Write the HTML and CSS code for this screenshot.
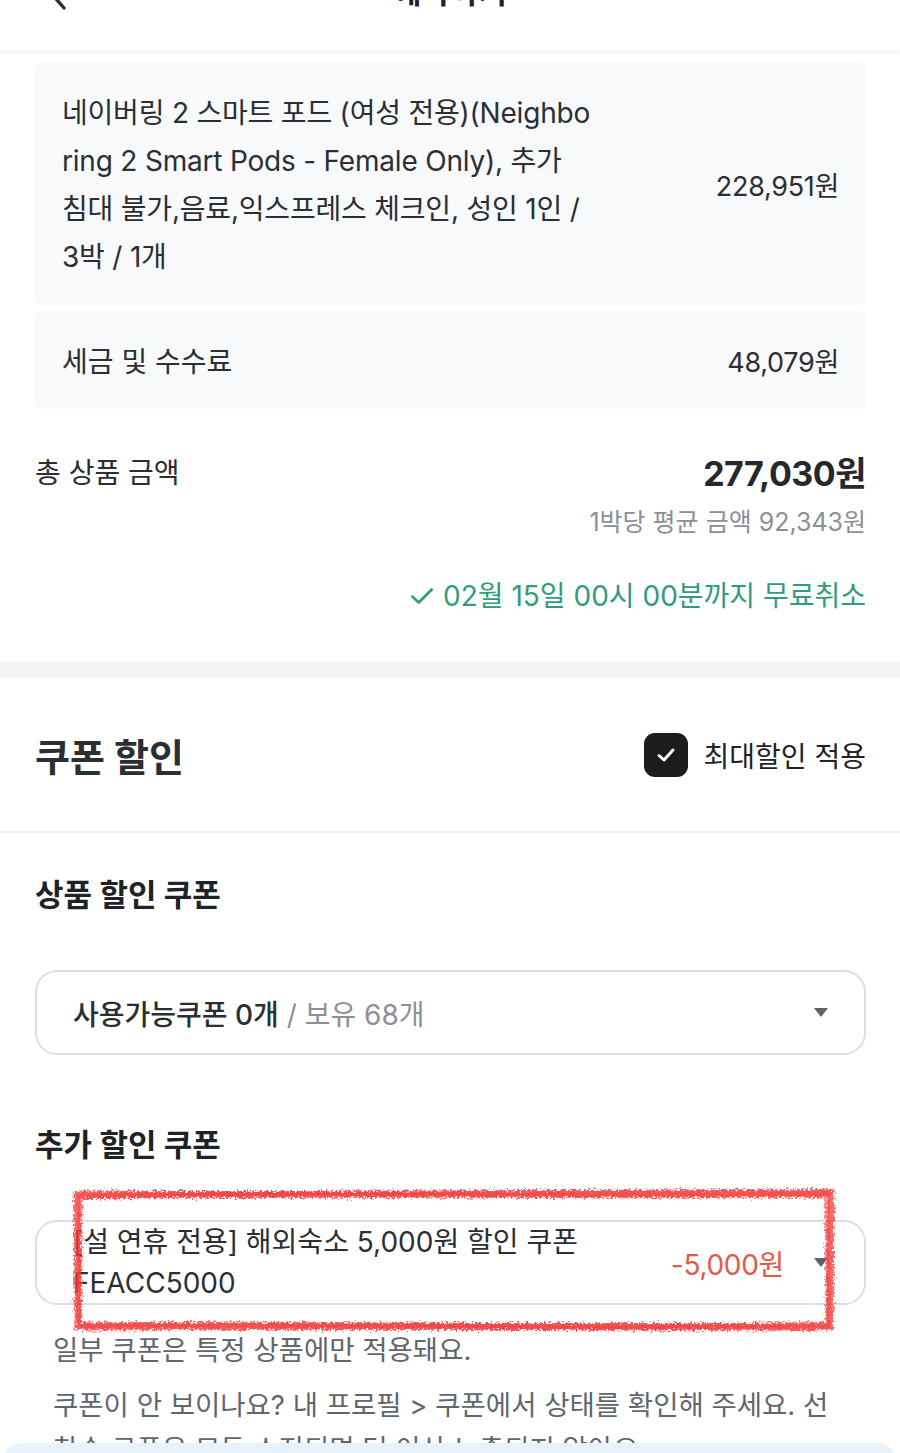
FILE: index.html
```html
<!DOCTYPE html>
<html lang="ko">
<head>
<meta charset="utf-8">
<title>예약하기</title>
<link rel="stylesheet" href="styles.css">
</head>
<body>
<div class="page">
  <header class="topbar">
    <div class="topbar-inner">
      <svg class="back" width="40" height="40" viewBox="0 0 40 40"><path d="M26 4 L12 20 L26 36" fill="none" stroke="#2b2e33" stroke-width="3.4" stroke-linecap="round" stroke-linejoin="round"/></svg>
      <h1 class="title">예약하기</h1>
    </div>
  </header>

  <section class="summary">
    <div class="card card-product">
      <p class="item-name">네이버링 2 스마트 포드 (여성 전용)(Neighbo<br>ring 2 Smart Pods - Female Only), 추가<br>침대 불가,음료,익스프레스 체크인, 성인 1인 /<br>3박 / 1개</p>
      <span class="item-price">228,951원</span>
    </div>
    <div class="card card-fee">
      <span class="fee-label">세금 및 수수료</span>
      <span class="item-price">48,079원</span>
    </div>

    <div class="total-row">
      <span class="total-label">총 상품 금액</span>
      <span class="total-price">277,030원</span>
    </div>
    <div class="avg">1박당 평균 금액 92,343원</div>
    <div class="free-cancel">
      <svg width="26" height="26" viewBox="0 0 24 24"><path d="M3 12.5 L9 18 L21 6" fill="none" stroke="#2f9d7d" stroke-width="2.4" stroke-linecap="round" stroke-linejoin="round"/></svg>
      <span>02월 15일 00시 00분까지 무료취소</span>
    </div>
  </section>

  <div class="band"></div>

  <section class="coupon-head">
    <h2 class="coupon-title">쿠폰 할인</h2>
    <label class="max-apply">
      <span class="checkbox"><svg width="24" height="24" viewBox="0 0 24 24"><path d="M5 12.5 L10 17 L19 7" fill="none" stroke="#fff" stroke-width="3" stroke-linecap="round" stroke-linejoin="round"/></svg></span>
      <span>최대할인 적용</span>
    </label>
  </section>
  <div class="divider"></div>

  <section class="coupons">
    <h3 class="sub-title">상품 할인 쿠폰</h3>
    <div class="select">
      <span class="select-text"><b class="strong">사용가능쿠폰 0개</b><span class="muted"> / 보유 68개</span></span>
      <span class="caret"></span>
    </div>

    <h3 class="sub-title second">추가 할인 쿠폰</h3>
    <div class="select-wrap">
      <div class="select select-chosen">
        <span class="select-text chosen">[설 연휴 전용] 해외숙소 5,000원 할인 쿠폰<br>FEACC5000</span>
        <span class="discount">-5,000원</span>
        <span class="caret"></span>
      </div>
      <svg class="scribble" width="770" height="150" viewBox="0 0 770 150">
        <defs>
          <filter id="rough" x="-5%" y="-20%" width="110%" height="140%">
            <feTurbulence type="fractalNoise" baseFrequency="0.45" numOctaves="3" seed="4" result="n"/>
            <feDisplacementMap in="SourceGraphic" in2="n" scale="8" xChannelSelector="R" yChannelSelector="G"/>
          </filter>
        </defs>
        <g filter="url(#rough)" fill="none" stroke="#f23b3b" stroke-linecap="round">
          <path d="M6 10 L760 8 L759 142 L7 141 Z" stroke-width="7" opacity="0.75"/>
          <path d="M8 12 C200 6 500 13 757 10 M756 12 L757 140 M755 139 C500 144 250 137 9 140 M8 139 L9 12" stroke-width="5" opacity="0.6"/>
          <path d="M10 7 C300 11 520 5 758 6 M12 144 C300 140 520 145 757 143" stroke-width="4" opacity="0.45"/>
        </g>
      </svg>
    </div>

    <div class="notes">
      <p>일부 쿠폰은 특정 상품에만 적용돼요.</p>
      <p>쿠폰이 안 보이나요? 내 프로필 &gt; 쿠폰에서 상태를 확인해 주세요. 선착순 쿠폰은 모두 소진되면 더 이상 노출되지 않아요.</p>
    </div>
  </section>

  <div class="bottom-sheet"></div>
</div>
</body>
</html>
```
FILE: styles.css
```css
* { box-sizing: border-box; }
html, body { margin: 0; padding: 0; background: #fff; }
body {
  font-family: "Inter", "Noto Sans CJK KR", "Noto Sans", sans-serif;
  color: #2b2e33;
  width: 900px;
  height: 1453px;
  overflow: hidden;
}
.page { position: relative; width: 900px; }

.topbar {
  height: 52px;
  overflow: hidden;
  background: #fff;
  box-shadow: 0 2px 3px rgba(0,0,0,0.04);
  border-bottom: 1px solid #f2f3f5;
  position: relative;
}
.topbar-inner {
  margin-top: -30px;
  height: 44px;
  display: flex;
  align-items: center;
  justify-content: center;
  position: relative;
}
.back { position: absolute; left: 38px; top: 2px; }
.title { margin: 0; font-size: 31px; font-weight: 700; line-height: 44px; color: #1f2226; }

.summary { padding: 10px 34px 0 35px; }
.card {
  background: #f8f9fa;
  border-radius: 8px;
  display: flex;
  align-items: center;
  justify-content: space-between;
  padding: 0 27px;
}
.card-product { height: 243px; padding-top: 2px; }
.card-fee { height: 98px; margin-top: 6px; }
.item-name {
  margin: 0;
  font-size: 28px;
  line-height: 48px;
  white-space: nowrap;
  color: #2b2e33;
  letter-spacing: -0.2px;
}
.item-price { font-size: 27px; color: #2b2e33; letter-spacing: -0.3px; }
.fee-label { font-size: 28px; color: #2b2e33; }

.total-row {
  margin-top: 40px;
  display: flex;
  justify-content: space-between;
  align-items: center;
  height: 44px;
}
.total-label { font-size: 28px; color: #2b2e33; }
.total-price { font-size: 34px; font-weight: 700; color: #25282c; letter-spacing: -0.5px; }
.avg {
  margin-top: 11px;
  text-align: right;
  font-size: 25px;
  line-height: 36px;
  color: #8c9096;
}
.free-cancel {
  margin-top: 38px;
  display: flex;
  justify-content: flex-end;
  align-items: center;
  gap: 8px;
  font-size: 28px;
  line-height: 36px;
  color: #2f9d7d;
  padding-bottom: 47px;
}

.band { height: 17px; background: #f3f4f6; }

.coupon-head {
  height: 153px;
  padding: 0 34px 0 35px;
  display: flex;
  justify-content: space-between;
  align-items: center;
}
.coupon-title { margin: 0; font-size: 38px; font-weight: 700; color: #2b2e33; }
.max-apply { display: flex; align-items: center; gap: 16px; font-size: 28px; color: #1f2226; }
.checkbox {
  width: 44px; height: 44px;
  border-radius: 11px;
  background: #1c1c1e;
  display: flex; align-items: center; justify-content: center;
}
.divider { height: 2px; background: #eceef1; }

.coupons { padding: 0 34px 0 35px; }
.sub-title {
  margin: 42px 0 0;
  font-size: 31px;
  font-weight: 700;
  line-height: 40px;
  color: #1f2226;
}
.sub-title.second { margin-top: 70px; }
.select {
  margin-top: 55px;
  height: 85px;
  border: 2px solid #dcdee2;
  border-radius: 22px;
  display: flex;
  align-items: center;
  padding: 0 36px 0 36px;
}
.select-text { flex: 1; font-size: 28px; }
.strong { font-weight: 500; color: #2b2e33; }
.muted { color: #8c9096; }
.caret {
  width: 0; height: 0;
  border-left: 7px solid transparent;
  border-right: 7px solid transparent;
  border-top: 9px solid #5f6368;
}
.select-wrap { position: relative; margin-top: 55px; }
.select-chosen { margin-top: 0; }
.chosen { line-height: 41px; color: #2b2e33; }
.discount { font-size: 28px; color: #e0594a; margin-right: 30px; letter-spacing: -0.3px; }
.scribble { position: absolute; left: 36px; top: -35px; pointer-events: none; }

.notes { padding: 0 18px; color: #61666d; font-size: 27.5px; line-height: 44px; }
.notes p { margin: 23px 0 0; }
.notes p + p { margin-top: 11px; }

.bottom-sheet {
  position: absolute;
  left: 2px; right: 3px;
  top: 1443px;
  height: 60px;
  background: #e7f2fb;
  border-radius: 20px 20px 0 0;
}
```
